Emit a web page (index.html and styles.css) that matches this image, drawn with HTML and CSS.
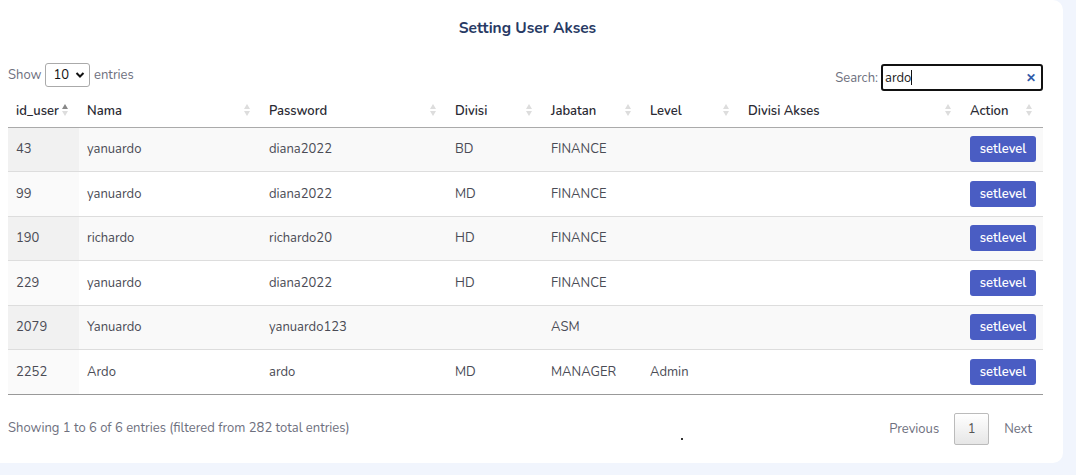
FILE: index.html
```html
<!DOCTYPE html>
<html>
<head>
<meta charset="utf-8">
<link rel="stylesheet" href="styles.css">
</head>
<body>
<div class="card">
  <h1 class="title">Setting User Akses</h1>
  <div class="controls">
    <div class="length">Show <span class="select">10 <svg width="10" height="8" viewBox="0 0 10 8"><path d="M1.5 2 L5 5.5 L8.5 2" fill="none" stroke="#111" stroke-width="2"/></svg></span> entries</div>
    <div class="search">Search: <span class="input">ardo<span class="caret"></span><span class="clear">✕</span></span></div>
  </div>
  <table class="tbl">
    <colgroup>
      <col style="width:71px"><col style="width:182px"><col style="width:186px"><col style="width:96px"><col style="width:99px"><col style="width:98px"><col style="width:222px"><col style="width:81px">
    </colgroup>
    <thead>
      <tr>
        <th class="sorted">id_user<span class="sort asc"></span></th>
        <th>Nama<span class="sort"></span></th>
        <th>Password<span class="sort"></span></th>
        <th>Divisi<span class="sort"></span></th>
        <th>Jabatan<span class="sort"></span></th>
        <th>Level<span class="sort"></span></th>
        <th>Divisi Akses<span class="sort"></span></th>
        <th>Action<span class="sort"></span></th>
      </tr>
    </thead>
    <tbody>
      <tr><td class="s">43</td><td>yanuardo</td><td>diana2022</td><td>BD</td><td>FINANCE</td><td></td><td></td><td><span class="btn">setlevel</span></td></tr>
      <tr><td class="s">99</td><td>yanuardo</td><td>diana2022</td><td>MD</td><td>FINANCE</td><td></td><td></td><td><span class="btn">setlevel</span></td></tr>
      <tr><td class="s">190</td><td>richardo</td><td>richardo20</td><td>HD</td><td>FINANCE</td><td></td><td></td><td><span class="btn">setlevel</span></td></tr>
      <tr><td class="s">229</td><td>yanuardo</td><td>diana2022</td><td>HD</td><td>FINANCE</td><td></td><td></td><td><span class="btn">setlevel</span></td></tr>
      <tr><td class="s">2079</td><td>Yanuardo</td><td>yanuardo123</td><td></td><td>ASM</td><td></td><td></td><td><span class="btn">setlevel</span></td></tr>
      <tr><td class="s">2252</td><td>Ardo</td><td>ardo</td><td>MD</td><td>MANAGER</td><td>Admin</td><td></td><td><span class="btn">setlevel</span></td></tr>
    </tbody>
  </table>
  <div class="footer">
    <div class="info">Showing 1 to 6 of 6 entries (filtered from 282 total entries)</div>
    <div class="dot"></div>
    <div class="pager"><span class="pg">Previous</span><span class="pg cur">1</span><span class="pg">Next</span></div>
  </div>
</div>
</body>
</html>
```
FILE: styles.css
```css
html, body { margin: 0; padding: 0; }
body {
  background: #f1f5fd;
  font-family: "Nunito", "Lato", "Open Sans", sans-serif;
  font-size: 13px;
  color: #3a3b45;
  width: 1076px;
  height: 475px;
  overflow: hidden;
}
.card {
  width: 1063px;
  height: 463px;
  background: #fff;
  border-radius: 0 10px 10px 0;
  box-sizing: border-box;
  padding: 0 20px 0 8px;
}
.title {
  margin: 0;
  padding-top: 17px;
  height: 44px;
  box-sizing: border-box;
  text-align: center;
  font-size: 15.5px;
  font-weight: 700;
  color: #283a64;
  padding-left: 4px;
}
.controls {
  display: flex;
  justify-content: space-between;
  align-items: flex-start;
  height: 51px;
  box-sizing: border-box;
  padding-top: 19px;
  color: #6e707e;
}
.length { display: flex; align-items: center; gap: 3px; }
.select {
  display: inline-flex; align-items: center; gap: 6px;
  height: 24px; box-sizing: border-box;
  border: 1px solid #aaa; border-radius: 3px;
  padding: 0 4px 0 7px; color: #111; margin: 0 1px;
}
.search { display: flex; align-items: center; gap: 3px; margin-top: 1px; }
.input {
  position: relative;
  display: inline-flex; align-items: center;
  width: 162px; height: 27px; box-sizing: border-box;
  border: 2px solid #111; border-radius: 3px;
  padding-left: 2px; color: #222;
}
.caret { display: inline-block; width: 1px; height: 15px; background: #111; }
.clear { position: absolute; right: 5px; top: 4px; color: #2f5aa8; font-size: 12px; font-weight: 700; }
.tbl {
  width: 1035px;
  table-layout: fixed;
  border-collapse: collapse;
}
.tbl th {
  position: relative;
  text-align: left;
  font-weight: 600;
  color: #2a2a33;
  height: 32px;
  padding: 0 8px;
  border-bottom: 1px solid #aaa;
  box-sizing: border-box;
}
.sort {
  position: absolute; right: 11px; top: 9px;
  width: 6px; height: 12px;
}
.sort::before, .sort::after {
  content: ""; position: absolute; left: 0;
  border-left: 3px solid transparent; border-right: 3px solid transparent;
}
.sort::before { top: 0; border-bottom: 5px solid #ddd; }
.sort::after { top: 7px; border-top: 5px solid #ddd; }
.sort.asc::before { border-bottom-color: #888; }
.tbl td {
  height: 44.5px;
  padding: 0 8px;
  border-top: 1px solid #ddd;
  box-sizing: border-box;
  color: #4a4b55;
  vertical-align: middle;
}
.tbl tbody tr:first-child td { border-top: none; }
.tbl tbody tr:nth-child(odd) td { background: #f9f9f9; }
.tbl tbody tr:nth-child(odd) td.s { background: #f1f1f1; }
.tbl tbody tr:nth-child(even) td.s { background: #fafafa; }
.tbl tbody tr:last-child td { border-bottom: 1px solid #999; }
.btn {
  display: inline-block;
  width: 66px; height: 26px; line-height: 26px;
  text-align: center;
  background: #4a5dc3;
  color: #fff;
  font-size: 13px;
  font-weight: 600;
  border-radius: 3px;
}
.footer {
  display: flex;
  justify-content: space-between;
  align-items: center;
  height: 66px;
  color: #6e707e;
  position: relative;
}
.dot { position: absolute; left: 673px; top: 43px; width: 2px; height: 2px; background: #333; }
.pager { display: flex; align-items: center; margin-right: -4px; margin-top: 2px; }
.pg { padding: 0 15px; color: #6e707e; }
.pg.cur {
  display: inline-flex; align-items: center; justify-content: center;
  width: 35px; height: 32px; box-sizing: border-box; padding: 0;
  border: 1px solid #bbb; border-radius: 2px;
  background: linear-gradient(#fff, #e6e6e6);
  color: #555;
}
```
